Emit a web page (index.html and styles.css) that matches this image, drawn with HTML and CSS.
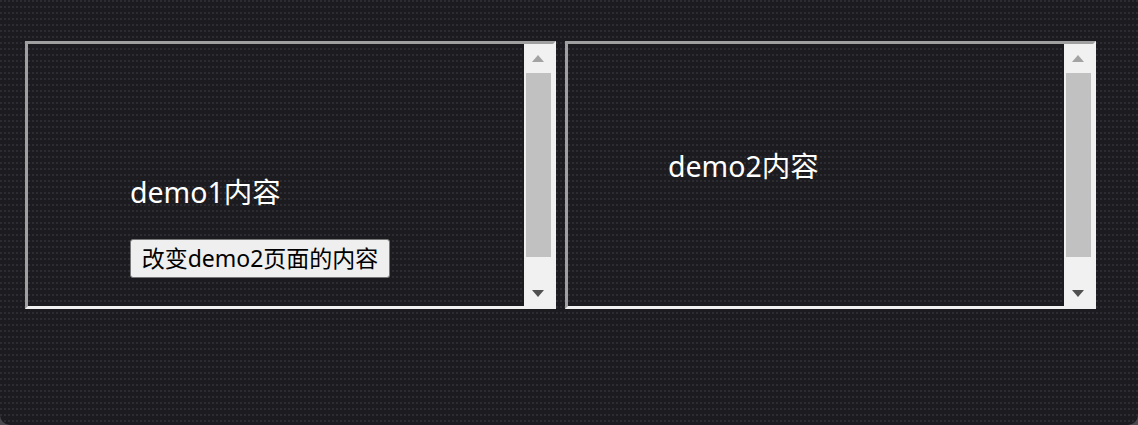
FILE: index.html
```html
<!DOCTYPE html>
<html lang="zh">
<head>
<meta charset="utf-8">
<title>demo</title>
<link rel="stylesheet" href="styles.css">
</head>
<body>
<div class="window">
  <div class="frames">
    <div class="frame">
      <div class="frame-content demo1">
        <p class="demo-text">demo1内容</p>
        <button class="demo-btn" type="button">改变demo2页面的内容</button>
      </div>
      <div class="scrollbar">
        <div class="sb-btn"><span class="arrow up"></span></div>
        <div class="sb-track"><div class="sb-thumb"></div></div>
        <div class="sb-btn"><span class="arrow down"></span></div>
      </div>
    </div>
    <div class="frame">
      <div class="frame-content demo2">
        <p class="demo-text">demo2内容</p>
      </div>
      <div class="scrollbar">
        <div class="sb-btn"><span class="arrow up"></span></div>
        <div class="sb-track"><div class="sb-thumb"></div></div>
        <div class="sb-btn"><span class="arrow down"></span></div>
      </div>
    </div>
  </div>
</div>
</body>
</html>
```

FILE: styles.css
```css
html, body {
  margin: 0;
  padding: 0;
  background: #4a4a4e;
  height: 100%;
}

.window {
  box-sizing: border-box;
  width: 1138px;
  height: 425px;
  background-color: #1c1b20;
  background-image: radial-gradient(circle at 1px 1px, #2d2c33 0.8px, transparent 1.2px);
  background-size: 4px 6px;
  border-radius: 0 0 10px 10px;
  padding: 41px 0 0 25px;
  font-family: "Noto Sans", "Noto Sans CJK SC", sans-serif;
}

.frames {
  display: flex;
  gap: 9px;
}

.frame {
  box-sizing: border-box;
  width: 531px;
  height: 268px;
  border: 3px solid;
  border-color: #a0a0a0 #f0f0f0 #f0f0f0 #a0a0a0;
  display: flex;
}

.frame-content {
  flex: 1;
  box-sizing: border-box;
  color: #ffffff;
}

.demo1 {
  padding: 129px 0 0 102px;
}

.demo2 {
  padding: 103px 0 0 100px;
}

.demo-text {
  margin: 0;
  font-size: 28.5px;
  line-height: 38px;
}

.demo-btn {
  margin-top: 28px;
  box-sizing: border-box;
  width: 260px;
  height: 39px;
  padding: 0;
  background: #efefef;
  border: 1px solid #767676;
  border-radius: 3px;
  color: #000;
  font-family: "Noto Sans", "Noto Sans CJK SC", sans-serif;
  font-size: 23px;
  line-height: 37px;
}

.scrollbar {
  width: 29px;
  background: #f1f1f1;
  display: flex;
  flex-direction: column;
}

.sb-btn {
  height: 27px;
  display: flex;
  align-items: center;
  justify-content: center;
  padding-right: 1px;
}

.sb-track {
  flex: 1;
  padding: 2px 2px 0 2px;
}

.sb-thumb {
  height: 184px;
  background: #c1c1c1;
}

.arrow {
  width: 0;
  height: 0;
  border-left: 6.5px solid transparent;
  border-right: 6.5px solid transparent;
}

.arrow.up {
  border-bottom: 7px solid #a3a3a3;
  margin-top: 1px;
}

.arrow.down {
  border-top: 7px solid #505050;
  margin-top: 2px;
}
```
